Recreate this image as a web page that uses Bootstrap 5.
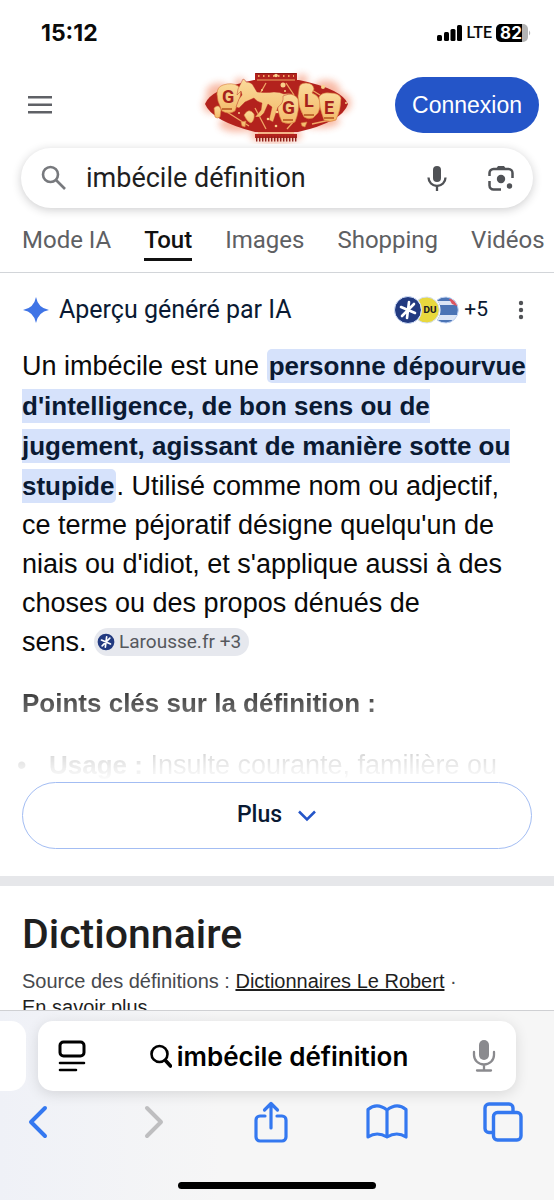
<!DOCTYPE html>
<html lang="fr">
<head>
<meta charset="utf-8">
<meta name="viewport" content="width=device-width, initial-scale=1">
<title>imbécile définition - Recherche Google</title>
<link href="https://cdn.jsdelivr.net/npm/bootstrap@5.3.0/dist/css/bootstrap.min.css" rel="stylesheet">
<style>
  body { font-family: "Liberation Sans", Arial, sans-serif; color: #0a0a0a; background: #fff; }
  svg { display: block; flex: none; }
  .font-product { font-family: Roboto, sans-serif; }
  .font-system { font-family: Inter, sans-serif; }
  .plain { border: 0; background: none; padding: 0; color: inherit; }

  .page-scroll { min-height: 0; }
  .status-bar { height: 66px; padding: 0 23px 0 41px; }
  .status-time { font-size: 23px; line-height: 28px; font-weight: 700; }
  .status-net { font-size: 16px; line-height: 20px; font-weight: 500; margin: 0 4px 0 4px; }

  .top-bar { height: 78px; padding: 0 15px; }
  .top-side { flex: 1 1 0; }
  .menu-btn { margin-left: 13px; }
  .btn-login { background: #2455c8; color: #fff; border-radius: 28px; height: 56px; padding: 0 16px; font-size: 23px; white-space: nowrap; }

  .search-pill { margin: 4px 21px 0; height: 60px; padding: 0 19px 0 20px; border-radius: 30px; background: #fff; box-shadow: 0 2px 10px rgba(32,33,36,.22); }
  .search-pill input { font-size: 27px; color: #1f1f1f; border: 0; outline: 0; background: none; min-width: 0; padding: 0; margin-left: 19px; }
  .lens-btn { margin-left: 41px; }

  .tab-row { border-bottom: 1px solid #d2d5d9; padding: 14px 0 11px 22px; gap: 33px; overflow: hidden; }
  .tab-row a { font-size: 24px; line-height: 36px; color: #5e6063; text-decoration: none; white-space: nowrap; border-bottom: 3px solid transparent; }
  .tab-row a.active { color: #111; border-color: #111; font-weight: 500; }

  .overview { padding: 17px 22px 27px; }
  .overview-title { font-size: 25px; line-height: 40px; font-weight: 400; color: #0a1a33; margin: 0 0 0 9px; }
  .source-stack svg + svg { margin-left: -9px; }
  .source-count { font-size: 21px; color: #0a1a33; }
  .dots-btn { margin: 0 8px 0 30px; }
  .answer { font-size: 27px; line-height: 39px; margin: 16px 0 0; }
  .answer .key-phrase { font-size: 26px; line-height: 40px; background: #d6e2fb; color: #0a1a33; padding: 2px; border-radius: 5px; font-weight: 700; }
  .chip { background: #e6e8ee; color: #55585d; border: 0; border-radius: 14px; height: 28px; padding: 0 8px 0 3px; font-size: 19px; line-height: 28px; }
  .fading { -webkit-mask-image: linear-gradient(#000, rgba(0,0,0,.12) 78%, transparent); mask-image: linear-gradient(#000, rgba(0,0,0,.12) 78%, transparent); margin: 11px 0 0 -5px; padding: 10px 0 0 5px; height: 109px; overflow: hidden; }
  .fading h2 { font-size: 26px; line-height: 40px; font-weight: 700; margin: 0; }
  .fading li { font-size: 27px; line-height: 40px; }
  .fading li strong { font-size: 26px; }
  .fading ul { list-style: none; padding: 0; margin: 22px 0 0 -5px; }
  .fading li::before { content: "•"; display: inline-block; width: 32px; }
  .btn-more { height: 67px; border: 1px solid #a3bdf3; border-radius: 34px; font-size: 23px; font-weight: 500; color: #0a1a33; gap: 15px; }

  .divider { height: 10px; background: #e6e7ea; }
  .dictionary { padding: 21px 22px 0; }
  .dictionary h1 { font-size: 41px; line-height: 54px; font-weight: 500; color: #1f1f1f; margin: 0; }
  .dictionary p { font-size: 20px; line-height: 26px; color: #47494d; margin: 7px 0 0; }
  .dictionary a { color: #1f1f1f; }
  .dictionary a.quiet { text-decoration: none; }

  .browser-bar { background: linear-gradient(90deg, #eff1f7, #f6f6f6 40%); border-top: 1px solid #cfd0d3; padding-top: 10px; }
  .address-row { gap: 12px; padding-right: 38px; }
  .address-peek { width: 26px; height: 70px; flex: none; background: #fff; border-radius: 0 15px 15px 0; }
  .address { height: 70px; background: #fff; border-radius: 15px; padding: 0 20px; box-shadow: 0 3px 14px rgba(0,0,0,.12); }
  .address-text { font-size: 26px; font-weight: 600; color: #000; white-space: nowrap; gap: 5px; }
  .tool-row { padding: 0 27px 0 14px; color: #3478f0; height: 62px; }
  .tool-row button { width: 48px; display: flex; justify-content: center; }
  .home-line { width: 198px; height: 7px; border-radius: 4px; background: #000; margin: 29px auto 11px; }
</style>
</head>
<body>
<div class="vh-100 d-flex flex-column overflow-hidden">
  <main class="page-scroll flex-grow-1 overflow-hidden">
    <div class="status-bar d-flex align-items-center justify-content-between font-system">
      <span class="status-time">15:12</span>
      <div class="d-flex align-items-center">
        <svg width="26" height="18" viewBox="0 0 26 18"><rect x="0" y="11" width="5" height="6" rx="1.500"/><rect x="7" y="8" width="5" height="9" rx="1.500"/><rect x="13.500" y="5" width="5" height="12" rx="1.500"/><rect x="20" y="1" width="5" height="16" rx="1.500"/></svg>
        <span class="status-net font-product">LTE</span>
        <svg width="35" height="20" viewBox="0 0 35 20"><defs><clipPath id="bat"><rect x="0" y="1" width="32" height="18" rx="5"/></clipPath></defs><g clip-path="url(#bat)"><rect width="32" height="20" fill="#b3b3b3"/><rect width="26" height="20"/></g><path d="M33 7.500q2.500 2.500 0 5z" fill="#b3b3b3"/><text x="15" y="16" text-anchor="middle" font-family="Inter, sans-serif" font-size="17" font-weight="700" fill="#fff">82</text></svg>
      </div>
    </div>

    <header class="top-bar d-flex align-items-center">
      <div class="top-side d-flex"><button class="plain menu-btn" aria-label="Menu"><svg width="24" height="18" viewBox="0 0 24 18" fill="#5f6166"><rect y="0" width="24" height="2.500"/><rect y="7.500" width="24" height="2.500"/><rect y="15" width="24" height="2.500"/></svg></button></div>
      <a href="#" aria-label="Google">
        <svg width="165" height="78" viewBox="0 6 165 78">
          <defs>
            <filter id="glow" x="-20%" y="-30%" width="140%" height="160%"><feGaussianBlur stdDeviation="3.500"/></filter>
            <linearGradient id="gold" x1="0" y1="0" x2="0" y2="1"><stop offset="0" stop-color="#fadb9b"/><stop offset="1" stop-color="#f3b968"/></linearGradient>
          </defs>
          <g fill="#f0683a" opacity=".45" filter="url(#glow)">
            <ellipse cx="24" cy="33" rx="13" ry="10"/><circle cx="45" cy="24" r="6"/><ellipse cx="131" cy="30" rx="14" ry="10"/><circle cx="146" cy="43" r="10"/><circle cx="107" cy="20" r="6"/><ellipse cx="43" cy="64" rx="19" ry="8"/><ellipse cx="81" cy="75" rx="26" ry="8"/><ellipse cx="125" cy="61" rx="20" ry="7"/><circle cx="16" cy="45" r="8"/>
          </g>
          <path d="M10 44Q15 29 59 20h45Q147 29 153 44 147 62 103 72H60Q17 61 10 44z" fill="#b3221d"/>
          <rect x="60" y="13" width="42" height="8" fill="#b3221d"/><path d="M61 13.500h40" stroke="#8d1713"/>
          <path d="M63 16h36" stroke="#f0a765" stroke-width="2" stroke-dasharray="1.500 3.500"/><circle cx="81" cy="15.500" r="1.800" fill="#f9d590"/>
          <path d="M62 20h38M63 73h36" stroke="#f0a765" stroke-width="1.200"/>
          <rect x="60" y="74" width="42" height="4" fill="#b3221d"/><path d="M61 79h41" stroke="#8d211b" stroke-width="5" stroke-dasharray="1.400 1.600"/>
          <path d="M71 23l-9 16M91 23l8 12M60 48l11 21M100 60l-8 9M32 52l22 14M135 60l-18 4M112 27l13 8" stroke="#f0a765" stroke-width="1.300" fill="none"/>
          <g fill="url(#gold)" stroke="#d97a3d" stroke-width=".6">
            <path d="M22 34q0-7 6-9 9-3 15 1 4 3 2 11l-5 14q-6 4-13 0l-4-10z"/>
            <path d="M19 48q5-5 7 2l-1 7q-3 2-5 0z"/>
            <path d="M83 39q3-5 10-5t10 5q2 11-3 23-7 3-13 0-6-12-4-23z"/>
            <path d="M106 29q0-6 7-6t8 6l-2 4q6 2 8 8 1 6-2 12l-5 5q-5 2-9-1-6-10-6-21z" transform="translate(-2 0)"/>
            <path d="M124 37q3-5 11-4 9 0 11 5 0 12-5 22-6 3-12 0-5-12-5-23z"/>
            <path d="M49 55q5-8 10-1 1 6-3 9-4-1-7-8zM46 62l5-1-1 6-3-1zM106 63l6-1-2 5-3-1z"/>
          </g>
          <path d="M43 29l3-6 2-4 2 1 1 2q6 0 8 5l3 5q9 1 17 0 6 0 10 2l8-1-9 3q1 7-5 11l-3 9-2 6-4-2 3-13-4-3-4 9-4 4-5 0 6-7 1-7q-5-1-8-5l-9 4-6 6-3-1 3-8 3-4-1-4-4 4z" fill="url(#gold)" stroke="#b3221d" stroke-width=".4"/>
          <g fill="#f9d08a"><circle cx="88" cy="25" r="2.500"/><circle cx="90" cy="31" r="1"/><circle cx="128" cy="27" r="2"/><circle cx="73" cy="59" r="1.300"/><circle cx="82" cy="52" r="1.300"/><circle cx="81" cy="66" r="1.300"/><circle cx="151" cy="43" r="1"/><circle cx="67" cy="30" r="1"/><circle cx="44" cy="53" r="1"/></g>
          <path d="M27 49h10M88 60h10M109 55h10M129 58h10" stroke="#b3521d" stroke-width="1.500"/>
          <g font-family="Roboto, sans-serif" font-weight="700" font-size="18" fill="#a5221b"><text x="27" y="43">G</text><text x="87" y="54" font-size="19">G</text><text x="109" y="47">L</text><text x="129" y="54">E</text></g>
        </svg>
      </a>
      <div class="top-side d-flex justify-content-end"><button class="btn btn-login">Connexion</button></div>
    </header>

    <form class="search-pill d-flex align-items-center" role="search">
      <svg width="26" height="26" viewBox="0 0 26 26" fill="none" stroke="#77797d" stroke-width="2.600"><circle cx="9.500" cy="9.500" r="7.500"/><path d="M15 15l9 9"/></svg>
      <input class="font-product flex-grow-1" type="text" value="imbécile définition" aria-label="Rechercher">
      <button type="button" class="plain" aria-label="Recherche vocale"><svg width="20" height="27" viewBox="0 0 20 27"><rect x="6" y="1" width="8" height="16" rx="4" fill="#505256"/><path d="M1.500 12.500a8.500 8.500 0 0 0 17 0M10 21v5" fill="none" stroke="#505256" stroke-width="2.300"/></svg></button>
      <button type="button" class="plain lens-btn" aria-label="Recherche par image"><svg width="26" height="26" viewBox="0 0 26 26" fill="none" stroke="#505256" stroke-width="2.500"><path d="M1.500 11V8a4 4 0 0 1 4-4h15a4 4 0 0 1 4 4v5M1.500 16v4.500a4 4 0 0 0 4 4H13"/><path d="M8 4l2-3h6l2 3z" fill="#505256" stroke="none"/><circle cx="13" cy="14" r="4.200" fill="#505256" stroke="none"/><circle cx="21.500" cy="21" r="2.700" fill="#505256" stroke="none"/></svg></button>
    </form>

    <nav class="tab-row d-flex font-product">
      <a href="#">Mode IA</a><a href="#" class="active">Tout</a><a href="#">Images</a><a href="#">Shopping</a><a href="#">Vidéos</a>
    </nav>

    <section class="overview">
      <div class="d-flex align-items-center font-product">
        <svg width="28" height="28" viewBox="0 0 28 28"><path d="M14 1q2 11 13 13-11 2-13 13Q12 16 1 14 12 12 14 1z" fill="#3f74e6"/></svg>
        <h2 class="overview-title">Aperçu généré par IA</h2>
        <div class="source-stack d-flex ms-auto">
          <svg width="28" height="28" viewBox="0 0 28 28"><circle cx="14" cy="14" r="13.500" fill="#223a80" stroke="#d3e0fa"/><path d="M15 6l-2 16M7 11l14 6M20 8L8 20" stroke="#fff" stroke-width="2.600" stroke-linecap="round"/></svg>
          <svg width="28" height="28" viewBox="0 0 28 28"><path d="M5 4a13 13 0 1 1 0 20 16 16 0 0 0 0-20z" fill="#e8d83e" stroke="#d3e0fa"/><text x="17" y="17" text-anchor="middle" font-family="Inter, sans-serif" font-weight="800" font-size="9" fill="#222">DU</text></svg>
          <svg width="28" height="28" viewBox="0 0 28 28"><defs><clipPath id="flag"><path d="M5 4a13 13 0 1 1 0 20 16 16 0 0 0 0-20z"/></clipPath></defs><g clip-path="url(#flag)"><rect width="28" height="28" fill="#4b74b5"/><rect y="5" width="28" height="4" fill="#dbe5f5"/><rect y="19" width="28" height="5" fill="#dbe5f5"/><path d="M17 3h10v8l-7-3z" fill="#dc5560"/></g><path d="M5 4a13 13 0 1 1 0 20" fill="none" stroke="#c5d6f5"/></svg>
        </div>
        <span class="source-count ms-1">+5</span>
        <button class="plain dots-btn" aria-label="Plus d'options"><svg width="6" height="20" viewBox="0 0 6 20" fill="#505256"><circle cx="3" cy="3" r="2.200"/><circle cx="3" cy="10" r="2.200"/><circle cx="3" cy="17" r="2.200"/></svg></button>
      </div>
      <p class="answer">Un imbécile est une <strong class="key-phrase">personne dépourvue d'intelligence, de bon sens ou de jugement, agissant de manière sotte ou stupide</strong>. Utilisé comme nom ou adjectif, ce terme péjoratif désigne quelqu'un de niais ou d'idiot, et s'applique aussi à des choses ou des propos dénués de<br>sens. <button class="chip font-product d-inline-flex align-items-center gap-1"><svg width="18" height="18" viewBox="0 0 28 28"><circle cx="14" cy="14" r="13" fill="#223a80"/><path d="M15 6l-2 16M7 11l14 6M20 8L8 20" stroke="#fff" stroke-width="2.600" stroke-linecap="round"/></svg>Larousse.fr +3</button></p>
      <div class="fading">
        <h2>Points clés sur la définition :</h2>
        <ul><li><strong>Usage :</strong> Insulte courante, familière ou</li></ul>
      </div>
      <button class="btn btn-more font-product w-100 d-flex align-items-center justify-content-center">Plus <svg width="20" height="14" viewBox="0 0 20 14" fill="none" stroke="#2455c8" stroke-width="2.500"><path d="M2 2.500l8 8 8-8"/></svg></button>
    </section>

    <div class="divider"></div>

    <section class="dictionary">
      <h1 class="font-product">Dictionnaire</h1>
      <p>Source des définitions : <a href="#">Dictionnaires Le Robert</a> ·<br><a href="#" class="quiet">En savoir plus</a></p>
    </section>
  </main>

  <footer class="browser-bar">
    <div class="address-row d-flex">
      <div class="address-peek"></div>
      <div class="address flex-grow-1 d-flex align-items-center justify-content-between">
        <button class="plain" aria-label="Mise en page"><svg width="28" height="32" viewBox="0 0 28 32" fill="none" stroke="#000" stroke-width="3" stroke-linecap="round"><rect x="2" y="2" width="24" height="14" rx="3.500"/><path d="M2 23h24M2 30h16" stroke-width="2.600"/></svg></button>
        <button class="plain address-text d-flex align-items-center font-system"><svg width="22" height="24" viewBox="0 0 22 24" fill="none" stroke="#000"><circle cx="9.500" cy="10" r="8" stroke-width="2.600"/><path d="M15.500 16.500l5 5.500" stroke-width="3.600" stroke-linecap="round"/></svg>imbécile définition</button>
        <button class="plain" aria-label="Dictée"><svg width="24" height="32" viewBox="0 0 24 32" fill="none" stroke="#8a8a8e" stroke-width="2.300" stroke-linecap="round"><rect x="7" y="0" width="10" height="20" rx="5" fill="#8a8a8e" stroke="none"/><path d="M2 12v3a10 9.500 0 0 0 20 0v-3M12 25v5M5 30.500h14"/></svg></button>
      </div>
    </div>
    <div class="tool-row d-flex justify-content-between align-items-center">
      <button class="plain" aria-label="Précédent"><svg width="20" height="34" viewBox="0 0 20 34" fill="none" stroke="currentColor" stroke-width="4" stroke-linecap="round" stroke-linejoin="round"><path d="M17 3L3 17l14 14"/></svg></button>
      <button class="plain" aria-label="Suivant"><svg width="20" height="34" viewBox="0 0 20 34" fill="none" stroke="#bebec0" stroke-width="4" stroke-linecap="round" stroke-linejoin="round"><path d="M3 3l14 14L3 31"/></svg></button>
      <button class="plain" aria-label="Partager"><svg width="34" height="42" viewBox="0 0 34 42" fill="none" stroke="currentColor" stroke-width="3.200" stroke-linecap="round" stroke-linejoin="round"><path d="M11 15H6a4 4 0 0 0-4 4v17a4 4 0 0 0 4 4h22a4 4 0 0 0 4-4V19a4 4 0 0 0-4-4h-5M17 27V3M10.500 9L17 2.500 23.500 9"/></svg></button>
      <button class="plain" aria-label="Signets"><svg width="42" height="36" viewBox="0 0 42 36" fill="none" stroke="currentColor" stroke-width="3.200" stroke-linejoin="round"><path d="M21 6Q11-2 2 5.500V33q9-6 19 0 10-6 19 0V5.500Q31-2 21 6zM21 6v27"/></svg></button>
      <button class="plain" aria-label="Onglets"><svg width="40" height="40" viewBox="0 0 40 40" fill="none" stroke="currentColor" stroke-width="3.400"><path d="M10.500 30.500H6a4 4 0 0 1-4-4V6a4 4 0 0 1 4-4h20a4 4 0 0 1 4 4v4.500"/><rect x="10.500" y="10.500" width="27.500" height="27.500" rx="4"/></svg></button>
    </div>
    <div class="home-line"></div>
  </footer>
</div>
<script src="https://cdn.jsdelivr.net/npm/bootstrap@5.3.0/dist/js/bootstrap.bundle.min.js"></script>
</body>
</html>
